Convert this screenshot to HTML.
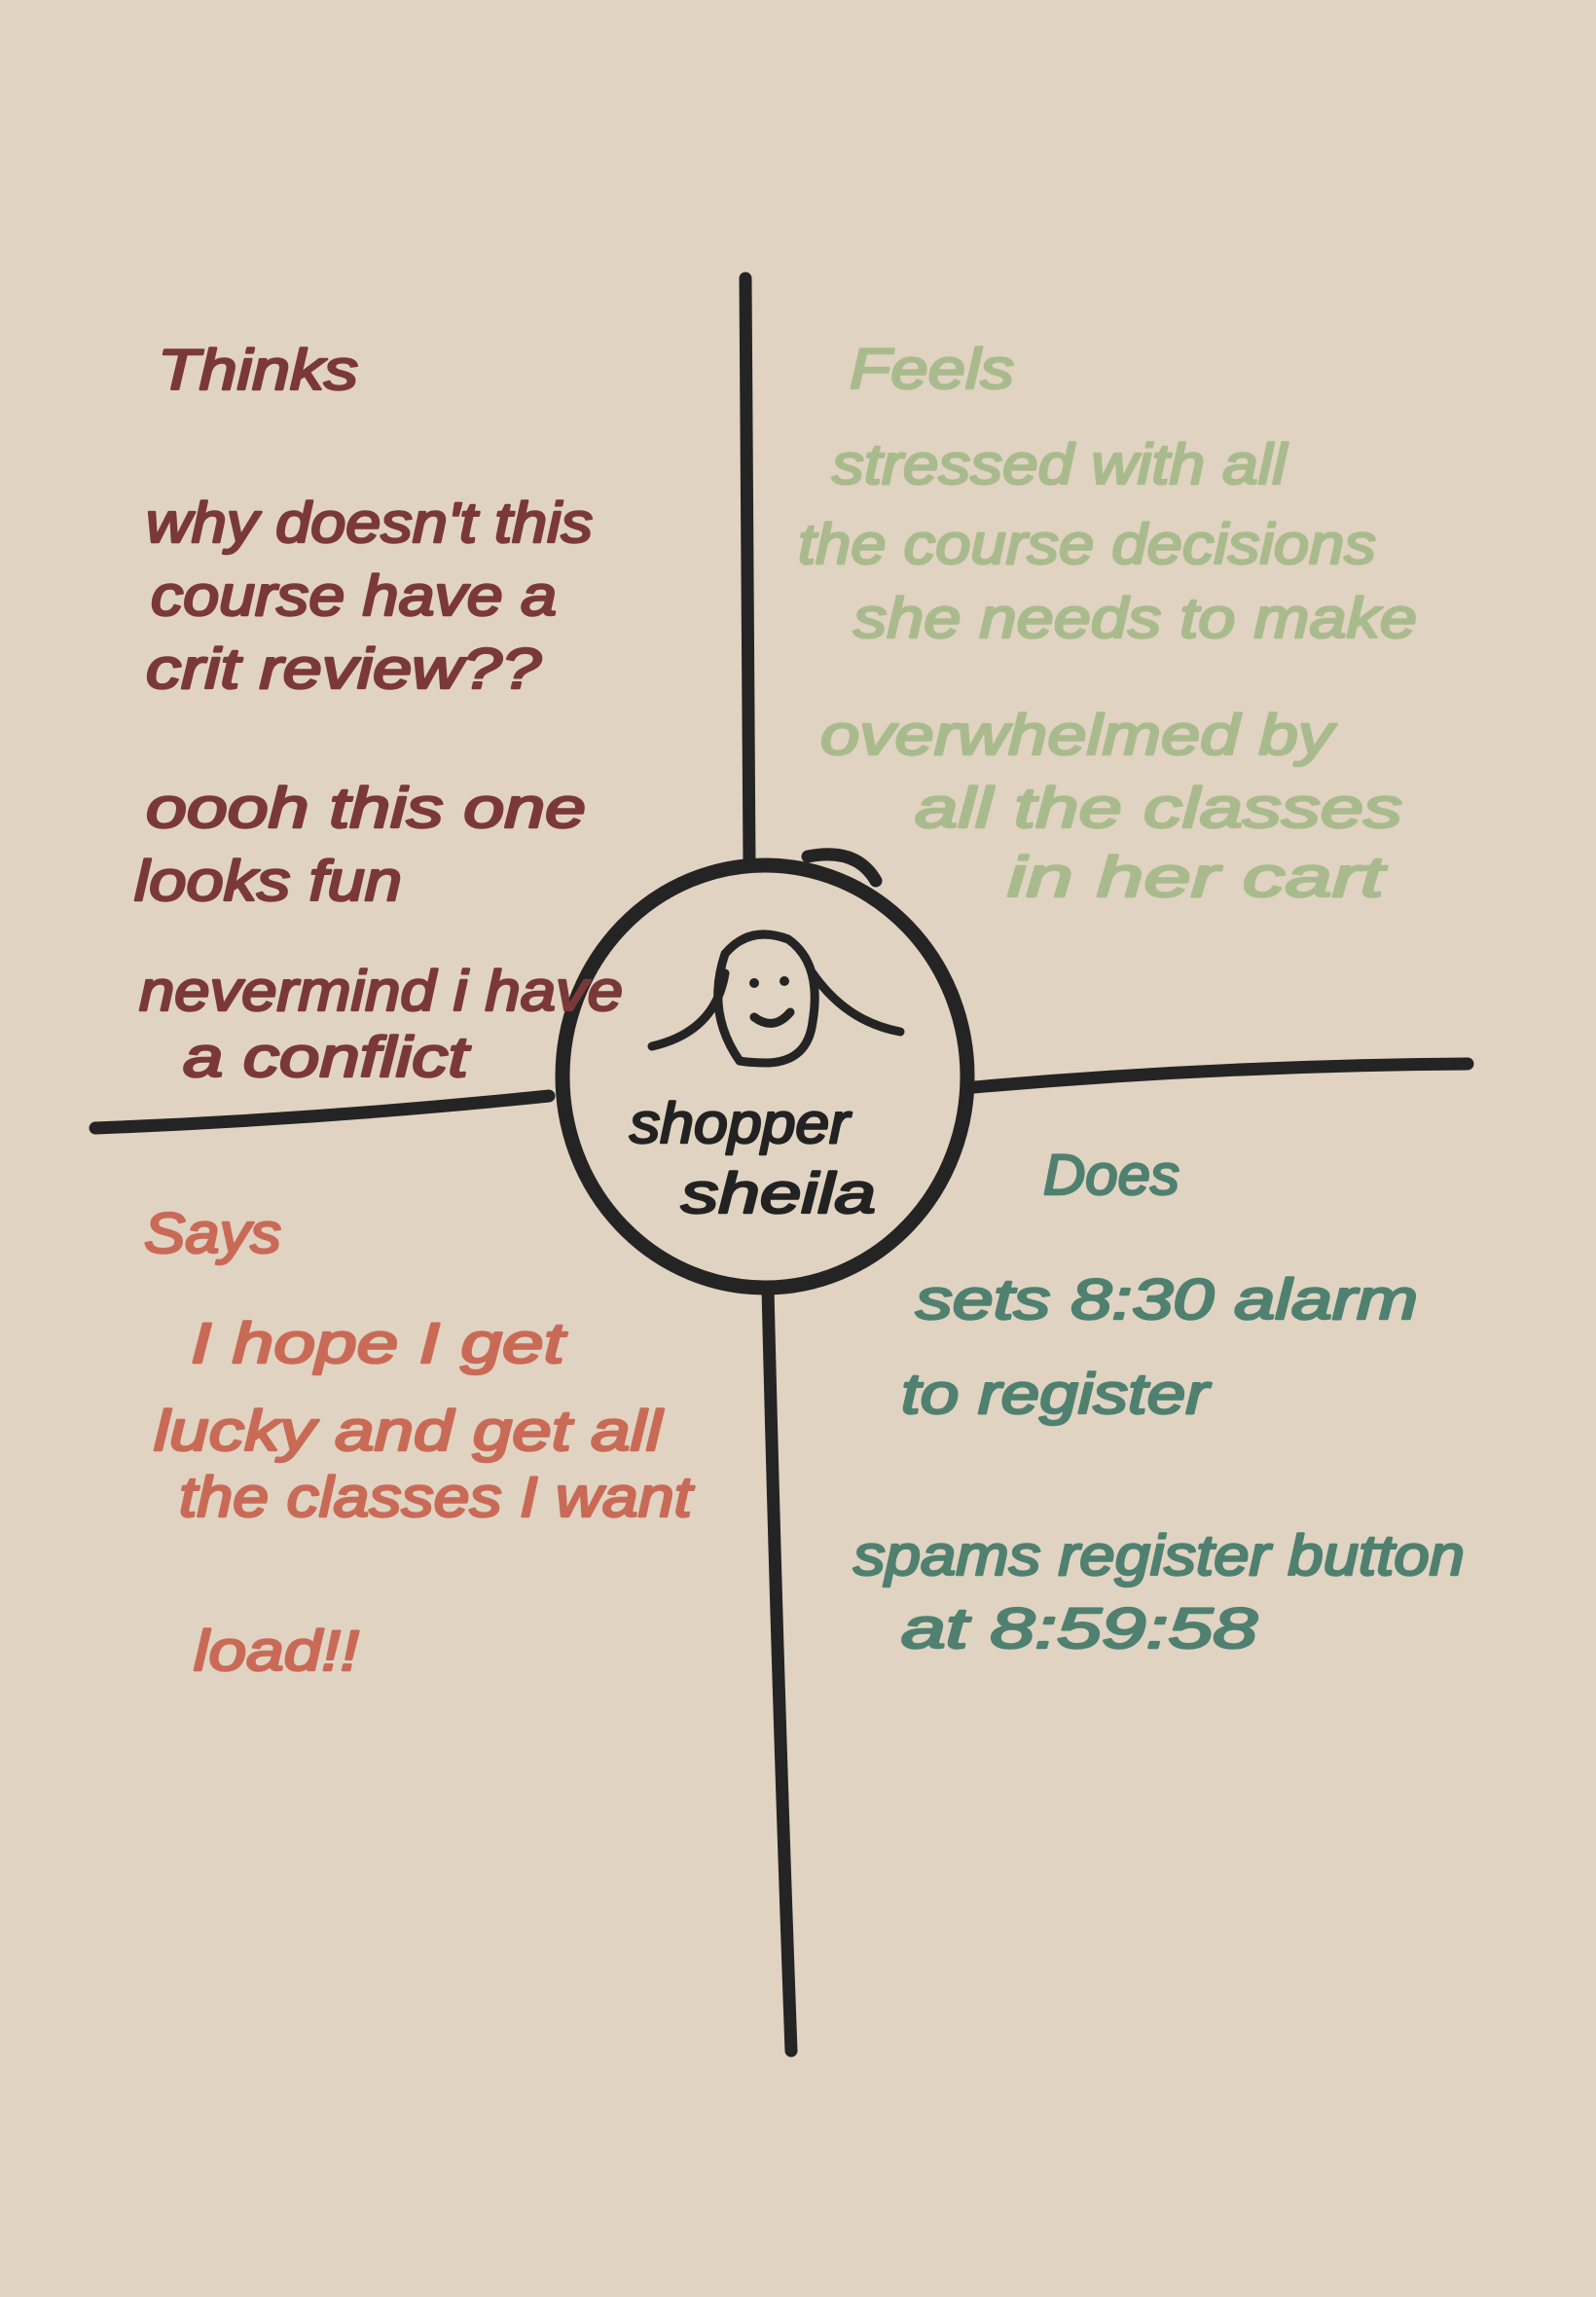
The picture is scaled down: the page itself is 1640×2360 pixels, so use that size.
<!DOCTYPE html>
<html><head><meta charset="utf-8"><style>
html,body{margin:0;padding:0;background:#e0d3c1;}
svg{display:block}
text{font-family:"Liberation Sans",sans-serif;font-style:italic;stroke-width:2.5;stroke-linejoin:round;}
.t{fill:#7b3838;stroke:#7b3838}.f{fill:#a9bb8d;stroke:#a9bb8d}.s{fill:#c96a57;stroke:#c96a57}.d{fill:#4f8070;stroke:#4f8070}.k{fill:#222;stroke:#222}
</style></head><body>
<svg width="1640" height="2360" viewBox="0 0 1640 2360" xmlns="http://www.w3.org/2000/svg">
<rect width="1640" height="2360" fill="#e0d3c1"/>
<g stroke="#242424" stroke-width="13" fill="none" stroke-linecap="round">
<path d="M766 286 Q768 600 770 888"/>
<path d="M789 1324 Q798 1700 813 2107"/>
<path d="M98 1159 Q330 1150 564 1126"/>
<path d="M1001 1117 Q1250 1095 1508 1093"/>
<ellipse cx="786" cy="1106" rx="208" ry="217" stroke-width="15"/>
<path d="M830 880 Q880 870 900 905"/>
<g stroke-width="9">
<path d="M760 1090 Q725 1040 745 980 Q770 950 810 965 Q845 990 835 1050 Q830 1090 790 1092 Q770 1092 760 1090"/>
<path d="M745 1000 Q735 1060 670 1075"/>
<path d="M835 1000 Q870 1050 925 1060"/>
<path d="M775 1045 Q795 1060 812 1040"/>
</g>
</g>
<circle cx="775" cy="1010" r="5" fill="#242424"/><circle cx="806" cy="1008" r="5" fill="#242424"/>
<g font-size="58">
<text class="t" x="162" y="400" textLength="206" lengthAdjust="spacingAndGlyphs">Thinks</text>
<text class="t" x="150" y="557" textLength="459" lengthAdjust="spacingAndGlyphs">why doesn't this</text>
<text class="t" x="155" y="632" textLength="417" lengthAdjust="spacingAndGlyphs">course have a</text>
<text class="t" x="150" y="707" textLength="406" lengthAdjust="spacingAndGlyphs">crit review??</text>
<text class="t" x="150" y="850" textLength="452" lengthAdjust="spacingAndGlyphs">oooh this one</text>
<text class="t" x="138" y="925" textLength="275" lengthAdjust="spacingAndGlyphs">looks fun</text>
<text class="t" x="143" y="1038" textLength="497" lengthAdjust="spacingAndGlyphs">nevermind i have</text>
<text class="t" x="188" y="1106" textLength="293" lengthAdjust="spacingAndGlyphs">a conflict</text>
<text class="f" x="873" y="399" textLength="169" lengthAdjust="spacingAndGlyphs">Feels</text>
<text class="f" x="855" y="497" textLength="467" lengthAdjust="spacingAndGlyphs">stressed with all</text>
<text class="f" x="820" y="579" textLength="594" lengthAdjust="spacingAndGlyphs">the course decisions</text>
<text class="f" x="877" y="655" textLength="579" lengthAdjust="spacingAndGlyphs">she needs to make</text>
<text class="f" x="843" y="775" textLength="527" lengthAdjust="spacingAndGlyphs">overwhelmed by</text>
<text class="f" x="940" y="850" textLength="501" lengthAdjust="spacingAndGlyphs">all the classes</text>
<text class="f" x="1035" y="921" textLength="387" lengthAdjust="spacingAndGlyphs">in her cart</text>
<text class="s" x="148" y="1287" textLength="141" lengthAdjust="spacingAndGlyphs">Says</text>
<text class="s" x="196" y="1400" textLength="384" lengthAdjust="spacingAndGlyphs">I hope I get</text>
<text class="s" x="158" y="1490" textLength="522" lengthAdjust="spacingAndGlyphs">lucky and get all</text>
<text class="s" x="184" y="1558" textLength="527" lengthAdjust="spacingAndGlyphs">the classes I want</text>
<text class="s" x="199" y="1716" textLength="170" lengthAdjust="spacingAndGlyphs">load!!</text>
<text class="d" x="1072" y="1227" textLength="140" lengthAdjust="spacingAndGlyphs">Does</text>
<text class="d" x="941" y="1355" textLength="516" lengthAdjust="spacingAndGlyphs">sets 8:30 alarm</text>
<text class="d" x="926" y="1452" textLength="316" lengthAdjust="spacingAndGlyphs">to register</text>
<text class="d" x="877" y="1618" textLength="628" lengthAdjust="spacingAndGlyphs">spams register button</text>
<text class="d" x="926" y="1693" textLength="366" lengthAdjust="spacingAndGlyphs">at 8:59:58</text>
<text class="k" x="647" y="1174" textLength="226" lengthAdjust="spacingAndGlyphs">shopper</text>
<text class="k" x="700" y="1246" textLength="200" lengthAdjust="spacingAndGlyphs">sheila</text>
</g>
</svg>
</body></html>
